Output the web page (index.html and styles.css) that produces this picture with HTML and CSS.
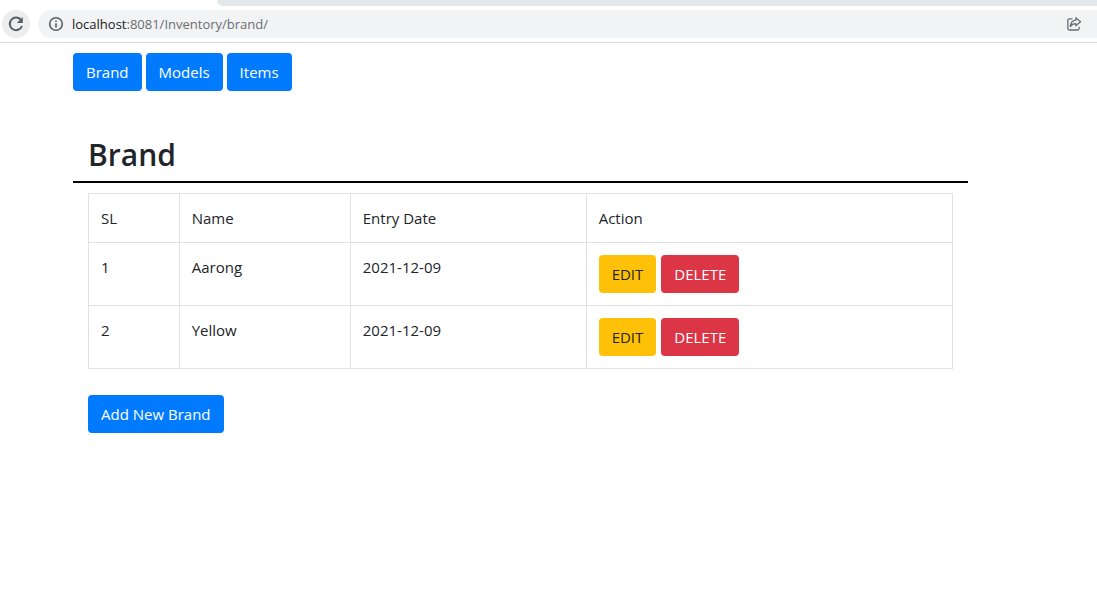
FILE: index.html
```html
<!DOCTYPE html>
<html lang="en">
<head>
<meta charset="utf-8">
<title>Brand</title>
<link rel="stylesheet" href="styles.css">
</head>
<body>
<header class="browser">
  <div class="tab-strip"></div>
  <div class="toolbar">
    <button class="reload" type="button" aria-label="Reload">
      <svg width="18" height="18" viewBox="0 0 18 18" fill="none" stroke="#5a5e63" stroke-width="2"><path d="M14.2 5.2A6.3 6.3 0 1 0 15 11"/><path d="M15.8 2v6H9.8z" fill="#5a5e63" stroke="none"/></svg>
    </button>
    <div class="address">
      <svg width="16" height="16" viewBox="0 0 16 16" fill="none" stroke="#5a5e63" stroke-width="1.6"><circle cx="8" cy="8" r="6.3"/><path d="M8 7.2v4.2M8 4.4v1.7"/></svg>
      <span class="url"><span class="host">localhost</span>:8081/Inventory/brand/</span>
      <button class="share" type="button" aria-label="Share">
        <svg width="16" height="16" viewBox="0 0 16 16" fill="none" stroke="#6a6e73" stroke-width="1.3" stroke-linejoin="round"><path d="M6.5 2.8H3.6Q1.8 2.8 1.8 4.6v7.6Q1.8 14 3.6 14h7.8q1.8 0 1.8-1.8v-1.4"/><path d="M9.8 1.8l4.7 4-4.7 4V7.6Q6.3 7.5 4.3 10.6 4.7 4.8 9.8 4.2z"/></svg>
      </button>
    </div>
  </div>
</header>
<main class="page">
  <nav class="nav">
    <a class="btn primary" href="#brand">Brand</a>
    <a class="btn primary" href="#models">Models</a>
    <a class="btn primary" href="#items">Items</a>
  </nav>
  <h1 class="title">Brand</h1>
  <section class="content">
    <table class="brands">
      <colgroup><col class="col-sl"><col class="col-name"><col class="col-date"><col class="col-action"></colgroup>
      <tbody>
        <tr><td>SL</td><td>Name</td><td>Entry Date</td><td>Action</td></tr>
        <tr><td>1</td><td>Aarong</td><td>2021-12-09</td><td><div class="actions"><button class="btn warning" type="button">EDIT</button><button class="btn danger" type="button">DELETE</button></div></td></tr>
        <tr><td>2</td><td>Yellow</td><td>2021-12-09</td><td><div class="actions"><button class="btn warning" type="button">EDIT</button><button class="btn danger" type="button">DELETE</button></div></td></tr>
      </tbody>
    </table>
    <a class="btn primary" href="#new">Add New Brand</a>
  </section>
</main>
</body>
</html>
```
FILE: styles.css
```css
* { box-sizing: border-box; }
body {
  margin: 0;
  background: #fff;
  color: #212529;
  font: 15px/24px "Open Sans", "Noto Sans", sans-serif;
}
.browser { border-bottom: 1px solid #d9dadb; }
.tab-strip {
  height: 6px;
  margin-left: 217px;
  background: #e4e8eb;
  border-bottom-left-radius: 8px;
}
.toolbar {
  display: flex;
  gap: 8px;
  padding: 4px 0 4px 2px;
}
.reload {
  display: grid;
  place-items: center;
  width: 28px;
  height: 28px;
  padding: 0;
  border: 0;
  border-radius: 50%;
  background: #ededed;
}
.address {
  display: flex;
  flex: 1;
  align-items: center;
  gap: 8px;
  height: 28px;
  padding: 0 15px 0 10px;
  border-radius: 14px 0 0 14px;
  background: #f1f3f4;
}
.url { color: #6a6e73; font-size: 13px; }
.host { color: #202124; }
.share {
  display: grid;
  margin-left: auto;
  padding: 0;
  border: 0;
  background: none;
}
.page { padding: 10px 129px 24px 73px; }
.nav { display: flex; gap: 4px; }
.actions { display: flex; gap: 5px; }
.btn {
  display: inline-block;
  padding: 6px 12px;
  border: 1px solid transparent;
  border-radius: 4px;
  font: inherit;
  text-decoration: none;
}
.primary { background: #007bff; color: #fff; }
.warning { background: #ffc107; color: #212529; }
.danger { background: #dc3545; color: #fff; }
.title {
  margin: 44px 0 10px;
  padding: 0 15px 6px;
  border-bottom: 2px solid #000;
  font-size: 30px;
  font-weight: 600;
  line-height: 40px;
}
.content { padding: 0 15px; }
.brands {
  width: 100%;
  margin-bottom: 26px;
  border-collapse: collapse;
  table-layout: fixed;
}
.brands td {
  padding: 12px;
  border: 1px solid #dee2e6;
  vertical-align: top;
}
.col-sl { width: 10.5%; }
.col-name { width: 19.8%; }
.col-date { width: 27.3%; }
.col-action { width: 42.4%; }
```
